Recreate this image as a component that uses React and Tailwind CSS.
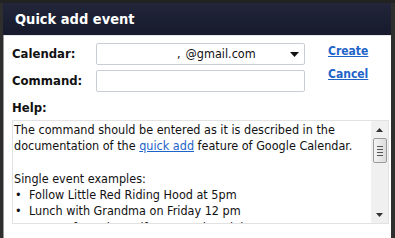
import React from "react";

export default function App() {
  return (
    <div className="w-[395px] h-[238px] overflow-hidden bg-[#2e2e2e] flex flex-col" style={{ fontFamily: '"DejaVu Sans Condensed", "DejaVu Sans", sans-serif' }}>
      <div className="h-[3px] bg-[#222222]" />
      <div className="flex-1 flex flex-col pl-[3px] pr-[4px]">
        <div className="h-[32px] bg-gradient-to-b from-[#23263a] to-[#161a2c] flex items-center pl-[12px]">
          <span className="text-white font-bold text-[14.5px] leading-none">Quick add event</span>
        </div>
        <div className="flex-1 flex pl-[1px] bg-[#9a9a9a]">
          <div className="flex-1 bg-white border-t border-[#e8e8e8] flex flex-col pl-[8px] pr-[2px] pt-[7px]">
            <div className="flex">
              <div className="flex flex-col w-[84px] font-bold text-[13px] text-[#111]">
                <div className="h-[22px] flex items-center">Calendar:</div>
                <div className="h-[22px] mt-[5px] flex items-center">Command:</div>
              </div>
              <div className="flex flex-col w-[209px]">
                <div className="h-[22px] border border-[#c9ced6] rounded-[2px] flex items-center pr-[5px] text-[12.5px] text-[#111]">
                  <span className="ml-[80px]">,</span>
                  <span className="ml-[5px] flex-1">@gmail.com</span>
                  <svg width="9" height="5" viewBox="0 0 9 5"><path d="M0 0h9L4.5 5z" fill="#111" /></svg>
                </div>
                <div className="h-[22px] mt-[5px] border border-[#c9ced6] rounded-[2px]" />
              </div>
              <div className="flex flex-col pl-[23px] font-bold text-[12px] text-[#1e64c8] underline">
                <span className="leading-[15px] mt-[1px]">Create</span>
                <span className="leading-[15px] mt-[8px]">Cancel</span>
              </div>
            </div>
            <div className="mt-[8px] font-bold text-[13px] text-[#111] leading-[16px]">Help:</div>
            <div className="mt-[4px] h-[104px] border border-[#e2e2e2] flex overflow-hidden">
              <div className="flex-1 pl-[1px] pt-[1px] text-[12.5px] leading-[16.3px] text-[#111] overflow-hidden">
                <div>The command should be entered as it is described in the</div>
                <div>documentation of the <span className="text-[#1e64c8] underline">quick add</span> feature of Google Calendar.</div>
                <div className="h-[16.3px]" />
                <div>Single event examples:</div>
                <div className="flex"><span className="w-[15px] pl-[1px]">•</span><span>Follow Little Red Riding Hood at 5pm</span></div>
                <div className="flex"><span className="w-[15px] pl-[1px]">•</span><span>Lunch with Grandma on Friday 12 pm</span></div>
                <div className="flex"><span className="w-[15px] pl-[1px]">•</span><span>Escape from the wolf on Saturday night</span></div>
              </div>
              <div className="w-[17px] bg-[#f0f0f0] flex flex-col items-center">
                <div className="h-[17px] flex items-center justify-center">
                  <svg width="7" height="4" viewBox="0 0 7 4"><path d="M0 4h7L3.5 0z" fill="#333" /></svg>
                </div>
                <div className="w-[14px] h-[25px] border border-[#9a9a9a] rounded-[2px] bg-gradient-to-r from-[#f4f4f4] to-[#dcdcdc] flex flex-col items-center justify-center gap-[2px]">
                  <div className="w-[6px] h-px bg-[#555]" />
                  <div className="w-[6px] h-px bg-[#555]" />
                  <div className="w-[6px] h-px bg-[#555]" />
                  <div className="w-[6px] h-px bg-[#555]" />
                </div>
                <div className="flex-1" />
                <div className="h-[17px] flex items-center justify-center">
                  <svg width="7" height="4" viewBox="0 0 7 4"><path d="M0 0h7L3.5 4z" fill="#333" /></svg>
                </div>
              </div>
            </div>
          </div>
        </div>
      </div>
    </div>
  );
}
